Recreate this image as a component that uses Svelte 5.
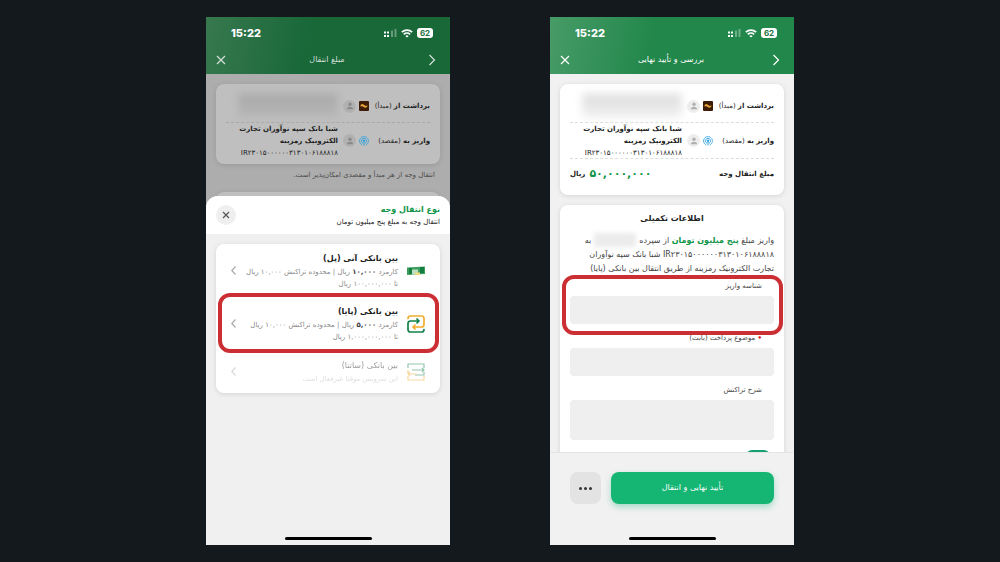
<script>
  const iban = 'IR۲۳۰۱۵۰۰۰۰۰۰۳۱۳۰۱۰۶۱۸۸۸۱۸';

  const methods = [
    { id: 'pol', title: 'بین بانکی آنی (پل)', fee: '۱۰,۰۰۰', max: '۱۰۰,۰۰۰,۰۰۰' },
    { id: 'paya', title: 'بین بانکی (پایا)', fee: '۵,۰۰۰', max: '۱,۰۰۰,۰۰۰,۰۰۰', marked: true },
    { id: 'satna', title: 'بین بانکی (ساتنا)', note: 'این سرویس موقتا غیرفعال است', faded: true },
  ];

  let depositId = $state('');
  let subject = $state('');
  let description = $state('');
</script>

{#snippet header(title)}
  <header class="top">
    <div class="status" dir="ltr">
      <span class="clock">15:22</span>
      <span class="status-icons">
        <svg width="13" height="9" viewBox="0 0 13 9" fill="#fff">
          <path d="M0 2.500h2v2H0zM0 6h2v2H0zM3 2.500h2v2H3zM3 6h2v2H3z" />
          <path opacity=".35" d="M7 1.500h2V8H7zM10.500 0h2v8h-2z" />
        </svg>
        <svg width="12" height="9" viewBox="0 0 12 9" fill="none" stroke="#fff" stroke-width="1.6">
          <path d="M.8 3.2C3.8.4 8.200.4 11.2 3.200M2.800 5.300c1.800-1.700 4.600-1.700 6.400 0" />
          <path d="M6 8.600 4.300 6.900c1-.8 2.400-.8 3.400 0z" fill="#fff" stroke="none" />
        </svg>
        <span class="battery">62</span>
      </span>
    </div>
    <div class="title-bar">
      <button class="icon-btn" aria-label="بازگشت">
        <svg width="8" height="12" viewBox="0 0 8 12"><path d="m1.500 1 5 5-5 5" /></svg>
      </button>
      <h1>{title}</h1>
      <button class="icon-btn" aria-label="بستن">
        <svg width="10" height="10" viewBox="0 0 10 10"><path d="m1 1 8 8M9 1 1 9" /></svg>
      </button>
    </div>
  </header>
{/snippet}

{#snippet person()}
  <span class="person">
    <svg width="8" height="8" viewBox="0 0 8 8">
      <circle cx="4" cy="2.300" r="1.700" />
      <path d="M.8 7.200c0-3.400 6.400-3.400 6.400 0z" />
    </svg>
  </span>
{/snippet}

{#snippet accounts()}
  <div class="row from">
    <span class="row-label"><b>برداشت از</b> (مبدأ)</span>
    <svg class="logo" viewBox="0 0 10 10">
      <rect width="10" height="10" rx="1" fill="#3d1d08" />
      <path d="M1.500 4.200C3 2 4.500 3.500 5.500 4.300S7.500 5 8.700 4.300C8.200 6.500 6.500 7.500 5 6.300 3.700 5.200 3 5 1.500 5.600z" fill="#e9a53a" />
    </svg>
    {@render person()}
    <span class="redacted"></span>
  </div>
  <div class="row to">
    <span class="row-label"><b>واریز به</b> (مقصد)</span>
    <svg class="logo" viewBox="0 0 10 10" fill="none" stroke="#2a9fdc">
      <path d="M3.200 9A4.400 4.400 0 1 1 6.800 9" stroke-width="1" stroke-dasharray="1.600 .4" />
      <path d="M4 7.300a2.600 2.600 0 1 1 2 0M5 4v5.500" stroke-width=".9" />
      <circle cx="5" cy="4.700" r=".8" fill="#2a9fdc" />
    </svg>
    {@render person()}
    <span class="account">
      <b>شبا بانک سپه نوآوران تجارت<br />الکترونیک رمزینه</b><br />
      <span class="iban">{iban}</span>
    </span>
  </div>
{/snippet}

{#snippet methodIcon(id)}
  {#if id === 'pol'}
    <svg class="method-icon" viewBox="0 0 18 18">
      <path d="M0 5.500 9 5l9-.5V12l-9 .5-9 .5z" fill="#3d9d5d" />
      <path d="M2 6h3v6H2zM13 5h4v6h-4z" fill="#147d40" />
      <path d="M5 7.500h6v5H5z" fill="#b9dfc0" />
      <path d="M8 10.500h5V13H8z" fill="#eeda83" />
    </svg>
  {:else if id === 'paya'}
    <svg class="method-icon" viewBox="0 0 18 18" fill="none" stroke-width="1.700" stroke-linecap="round" stroke-linejoin="round">
      <path d="M1 3.500Q1 1 3.500 1h11Q17 1 17 3.500v6q0 2.500-2.500 2.500H6M8 10l-2 2 2 2" stroke="#f1ad2d" />
      <path d="M17 14.500q0 2.500-2.500 2.500h-11Q1 17 1 14.500v-6Q1 6 3.500 6H12M10 4l2 2-2 2" stroke="#138049" />
    </svg>
  {:else}
    <svg class="method-icon" viewBox="0 0 18 18" fill="none" stroke-width="1.200">
      <path d="M1 5V1h16v4M5 7h12M15 5l2 2-2 2M17 9v3H8" stroke="#138049" />
      <path d="M1 7v4h9M3 9l-2 2 2 2M1 13v4h16v-4" stroke="#f1ad2d" />
    </svg>
  {/if}
{/snippet}

<main>
  <section class="phone dimmed" dir="rtl">
    {@render header('مبلغ انتقال')}
    <div class="backdrop">
      <div class="card summary">{@render accounts()}</div>
      <p class="hint">انتقال وجه از هر مبدأ و مقصدی امکان‌پذیر است.</p>
      <div class="card next-card"></div>
    </div>
    <div class="sheet">
      <div class="sheet-head">
        <div>
          <h2>نوع انتقال وجه</h2>
          <p>انتقال وجه به مبلغ پنج میلیون تومان</p>
        </div>
        <button class="round-close" aria-label="بستن">
          <svg width="8" height="8" viewBox="0 0 8 8"><path d="m1 1 6 6M7 1 1 7" /></svg>
        </button>
      </div>
      <div class="card methods">
        {#each methods as m (m.id)}
          <button class="method" class:marked={m.marked} class:faded={m.faded}>
            {@render methodIcon(m.id)}
            <span class="method-text">
              <strong>{m.title}</strong>
              {#if m.note}
                <small class="note">{m.note}</small>
              {:else}
                <small>کارمزد <b>{m.fee}</b> ریال | محدوده تراکنش ۱۰,۰۰۰ ریال</small>
                <small>تا {m.max} ریال</small>
              {/if}
            </span>
            <svg class="chevron" width="5" height="9" viewBox="0 0 5 9"><path d="M4.500.5.800 4.500l3.700 4" /></svg>
          </button>
        {/each}
      </div>
      <span class="home-bar"></span>
    </div>
  </section>

  <section class="phone" dir="rtl">
    {@render header('بررسی و تأیید نهایی')}
    <div class="content">
      <div class="card summary">
        {@render accounts()}
        <div class="row total">
          <b>مبلغ انتقال وجه</b>
          <span class="amount"><strong>۵۰,۰۰۰,۰۰۰</strong> <b>ریال</b></span>
        </div>
      </div>
      <form class="card details">
        <h2>اطلاعات تکمیلی</h2>
        <p>
          واریز مبلغ <b>پنج میلیون تومان</b> از سپرده<span class="redacted-inline"></span>به<br />
          {iban} شبا بانک سپه نوآوران<br />
          تجارت الکترونیک رمزینه از طریق انتقال بین بانکی (پایا)
        </p>
        <div class="field marked">
          <label for="deposit-id">شناسه واریز</label>
          <input id="deposit-id" type="text" bind:value={depositId} />
        </div>
        <div class="field">
          <label for="subject"><i>•</i> موضوع پرداخت (بابت)</label>
          <input id="subject" type="text" bind:value={subject} />
        </div>
        <div class="field">
          <label for="description">شرح تراکنش</label>
          <textarea id="description" bind:value={description}></textarea>
        </div>
        <input class="switch" type="checkbox" checked aria-label="ذخیره" />
      </form>
    </div>
    <footer>
      <div class="actions">
        <button class="confirm">تأیید نهایی و انتقال</button>
        <button class="more" aria-label="بیشتر"><span></span><span></span><span></span></button>
      </div>
      <span class="home-bar"></span>
    </footer>
  </section>
</main>

<style>
  :global(body) {
    background: #14191d;
  }

  main {
    display: grid;
    grid-template-columns: repeat(2, minmax(244px, 24.4vw));
    justify-content: center;
    gap: 10vw;
    padding: 17px 0;
    font-family: 'DejaVu Sans', sans-serif;
    font-size: 7px;
    line-height: 12px;
    color: #222;
  }

  h1,
  h2,
  p {
    margin: 0;
  }

  button,
  input,
  textarea {
    font: inherit;
    color: inherit;
    border: none;
    padding: 0;
    margin: 0;
    background: none;
  }

  button {
    cursor: pointer;
  }

  .phone {
    display: flex;
    flex-direction: column;
    height: calc(100vh - 34px);
    min-height: 528px;
    overflow: hidden;
    background: #f1f1f2;
    white-space: nowrap;
  }

  /* header */
  .top {
    flex-shrink: 0;
    height: 57px;
    box-sizing: border-box;
    padding: 8px 14px 4px;
    display: flex;
    flex-direction: column;
    justify-content: space-between;
    color: #fff;
    background: linear-gradient(100deg, #479b67 0%, #22874b 42%, #22874b 100%);
  }

  .dimmed .top {
    color: #d5dfd8;
    background: linear-gradient(100deg, #38784f 0%, #186838 42%, #186838 100%);
  }

  .status {
    display: flex;
    align-items: center;
    justify-content: space-between;
    height: 16px;
    padding: 0 3px 0 11px;
    color: #fff;
  }

  .clock {
    font: 800 11px/16px Inter, sans-serif;
  }

  .status-icons {
    display: flex;
    align-items: center;
    gap: 4px;
  }

  .battery {
    width: 16px;
    height: 10px;
    border-radius: 3px;
    background: #fff;
    color: #22733f;
    font: bold 8px/10px Inter, sans-serif;
    text-align: center;
  }

  .title-bar {
    display: flex;
    align-items: center;
    justify-content: space-between;
    height: 20px;
  }

  .title-bar h1 {
    font-size: 8px;
    font-weight: normal;
  }

  .icon-btn {
    display: flex;
    color: inherit;
  }

  .icon-btn:last-child {
    margin-left: -4px;
  }

  .icon-btn svg,
  .round-close svg,
  .chevron {
    fill: none;
    stroke: currentColor;
    stroke-width: 1.2;
  }

  /* cards */
  .card {
    border-radius: 8px;
    background: #fff;
    box-shadow: 0 1px 5px rgba(0, 0, 0, 0.12);
  }

  .summary {
    padding: 6px 10px;
  }

  .dimmed .backdrop .card {
    background: #bfbfbf;
  }

  .row {
    display: flex;
    align-items: center;
    height: 32px;
  }

  .row + .row {
    border-top: 1px dashed #dcdcdc;
  }

  .dimmed .row + .row {
    border-color: #a8a8a8;
  }

  .row.to {
    height: 35px;
  }

  .row.total {
    height: 30px;
  }

  .row-label {
    width: 61px;
  }

  .logo {
    width: 10px;
    height: 10px;
    flex-shrink: 0;
  }

  .person {
    display: flex;
    align-items: center;
    justify-content: center;
    flex-shrink: 0;
    width: 13px;
    height: 13px;
    margin: 0 3px 0 5px;
    border-radius: 50%;
    background: rgba(0, 0, 0, 0.07);
    fill: #b0b0b0;
  }

  .dimmed .person {
    fill: #8a8a8a;
  }

  .redacted {
    flex: 1;
    height: 24px;
    margin-left: 12px;
    border-radius: 4px;
    background: linear-gradient(#dcdcdc, #f2f2f2);
    filter: blur(4px);
  }

  .dimmed .redacted {
    background: linear-gradient(#a8a8a8, #b8b8b8);
  }

  .total {
    justify-content: space-between;
  }

  .amount {
    display: flex;
    align-items: center;
    gap: 4px;
  }

  .amount strong {
    font-size: 11px;
    color: #109547;
  }

  /* transfer type sheet */
  .backdrop {
    padding: 10px 10px 0;
    background: #adadad;
  }

  .hint {
    padding: 5px 5px 11px;
    color: #4a4a4a;
  }

  .next-card {
    height: 16px;
  }

  .sheet {
    flex: 1;
    display: flex;
    flex-direction: column;
    margin-top: -12px;
    border-radius: 12px 12px 0 0;
    overflow: hidden;
    background: #f0f0f1;
    position: relative;
  }

  .sheet-head {
    display: flex;
    align-items: center;
    justify-content: space-between;
    height: 38px;
    padding: 0 10px;
    background: #fff;
  }

  .sheet h2 {
    font-size: 8px;
    line-height: 13px;
    color: #109547;
  }

  .round-close {
    display: flex;
    align-items: center;
    justify-content: center;
    width: 20px;
    height: 20px;
    border-radius: 50%;
    background: #efefef;
    color: #555;
  }

  .methods {
    margin: 10px 10px 0;
  }

  .method {
    display: flex;
    align-items: center;
    width: 100%;
    height: 53px;
    padding: 0 15px;
    text-align: right;
    color: #888;
    position: relative;
  }

  .method.faded {
    height: 43px;
  }

  .faded > * {
    opacity: 0.45;
  }

  .method-icon {
    width: 18px;
    height: 18px;
    flex-shrink: 0;
  }

  .method-text {
    flex: 1;
    margin-right: 9px;
  }

  .chevron {
    color: #aaa;
  }

  .method strong {
    display: block;
    font-size: 8px;
    line-height: 14px;
    color: #1a1a1a;
  }

  .faded strong {
    font-weight: normal;
  }

  .method small {
    display: block;
    font-size: 7px;
  }

  .method small b {
    color: #444;
  }

  .method .note {
    opacity: 0.6;
  }

  .method.marked::after,
  .field.marked::after {
    content: '';
    position: absolute;
    inset: -4px 1px -3px 2px;
    border: 4px solid #cb2f33;
    border-radius: 12px;
    pointer-events: none;
  }

  /* review form */
  .content {
    flex: 1;
    min-height: 0;
    overflow: hidden;
    padding: 10px 10px 0;
  }

  .details {
    margin-top: 10px;
    padding: 7px 10px 10px;
  }

  .details h2 {
    font-size: 8px;
    line-height: 14px;
    text-align: center;
  }

  .details p {
    margin: 7px 0 4px;
    font-size: 8px;
    line-height: 14px;
    color: #444;
  }

  .details p b {
    color: #109547;
  }

  .redacted-inline {
    display: inline-block;
    width: 42px;
    height: 14px;
    margin: 0 3px;
    vertical-align: middle;
    background: #ececec;
    filter: blur(2px);
  }

  .field {
    position: relative;
    margin-bottom: 8px;
  }

  .field.marked::after {
    inset: -5px -9px -11px -8px;
  }

  .field label {
    display: block;
    padding: 0 12px 4px;
    color: #444;
  }

  .field i {
    font-style: normal;
    font-weight: bold;
    color: #e01020;
  }

  .field input,
  .field textarea {
    display: block;
    width: 100%;
    height: 28px;
    box-sizing: border-box;
    padding: 4px 8px;
    border-radius: 4px;
    background: #efefef;
    resize: none;
  }

  .field textarea {
    height: 40px;
  }

  .switch {
    appearance: none;
    display: block;
    width: 24px;
    height: 12px;
    margin: 10px 4px 0;
    border-radius: 6px;
    background: #16a070;
  }

  footer {
    display: flex;
    flex-direction: column;
    flex-shrink: 0;
    height: 93px;
    border-top: 1px solid #e4e4e4;
    box-sizing: border-box;
    padding-top: 19px;
    background: #f1f1f2;
  }

  .actions {
    display: flex;
    gap: 10px;
    padding: 0 20px;
  }

  .confirm {
    flex: 1;
    height: 32px;
    border-radius: 8px;
    background: #15b573;
    box-shadow: 0 3px 6px rgba(21, 181, 115, 0.35);
    color: #fff;
    font-size: 8px;
  }

  .more {
    display: flex;
    align-items: center;
    justify-content: center;
    gap: 2px;
    width: 31px;
    height: 32px;
    border-radius: 8px;
    background: #e3e3e3;
  }

  .more span {
    width: 3px;
    height: 3px;
    border-radius: 50%;
    background: #333;
  }

  .home-bar {
    width: 87px;
    height: 3px;
    margin: auto auto 5px;
    border-radius: 2px;
    background: #000;
  }
</style>
